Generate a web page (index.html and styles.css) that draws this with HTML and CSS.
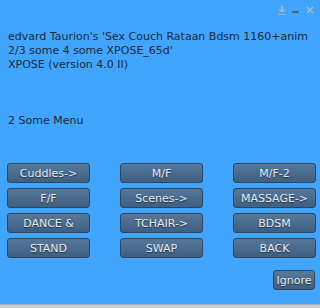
FILE: index.html
```html
<!DOCTYPE html>
<html lang="en">
<head>
  <meta charset="UTF-8">
  <meta name="viewport" content="width=device-width, initial-scale=1.0">
  <link rel="stylesheet" href="styles.css">
</head>
<body>

  <div class="floater">
    <div class="titlebar">
      <svg class="icon" width="8" height="9" viewBox="0 0 8 9">
        <rect x="3" y="0" width="2" height="4" fill="#9fb3c6"/>
        <polygon points="0.5,3.5 7.5,3.5 4,7" fill="#9fb3c6"/>
        <rect x="0" y="8" width="8" height="1" fill="#9fb3c6"/>
      </svg>
      <svg class="icon" width="8" height="9" viewBox="0 0 8 9">
        <rect x="0" y="5" width="7" height="2" fill="#4b6482"/>
      </svg>
      <svg class="icon" width="8" height="9" viewBox="0 0 8 9">
        <path d="M1 1 L7 7 M7 1 L1 7" stroke="#a8bccd" stroke-width="1.4"/>
      </svg>
    </div>

    <div class="message">edvard Taurion's 'Sex Couch Rataan Bdsm 1160+anim
2/3 some 4 some XPOSE_65d'
XPOSE (version 4.0 II)



2 Some Menu</div>

    <div class="buttons">
      <button class="btn">Cuddles-&gt;</button>
      <button class="btn">M/F</button>
      <button class="btn">M/F-2</button>
      <button class="btn">F/F</button>
      <button class="btn">Scenes-&gt;</button>
      <button class="btn">MASSAGE-&gt;</button>
      <button class="btn">DANCE &amp;</button>
      <button class="btn">TCHAIR-&gt;</button>
      <button class="btn">BDSM</button>
      <button class="btn">STAND</button>
      <button class="btn">SWAP</button>
      <button class="btn">BACK</button>
    </div>

    <div class="footer">
      <button class="btn ignore">Ignore</button>
    </div>
  </div>

</body>
</html>
```

FILE: styles.css
```css
body {
  margin: 0;
  background-color: #c9ccd0;
  font-family: "DejaVu Sans", Verdana, sans-serif;
}

.floater {
  height: 305px;
  background-color: #41a4fd;
  border-bottom: 1px solid #a9b2bb;
  box-sizing: border-box;
}

.titlebar {
  height: 30px;
  display: flex;
  justify-content: flex-end;
  align-items: flex-start;
  gap: 6px;
  padding: 6px 6px 0 0;
  box-sizing: border-box;
}

.icon {
  display: block;
}

.message {
  white-space: pre;
  font-size: 11px;
  line-height: 14px;
  color: #1c2a38;
  padding-left: 8px;
  height: 98px;
}

.buttons {
  display: grid;
  grid-template-columns: 83px 83px 83px;
  grid-auto-rows: 20px;
  column-gap: 30px;
  row-gap: 5px;
  padding-left: 7px;
  margin-top: 35px;
}

.btn {
  font-family: "DejaVu Sans", Verdana, sans-serif;
  font-size: 11px;
  color: #e6ebf0;
  text-shadow: 0 1px 1px #1d3048;
  background: linear-gradient(#56789b, #3f5f80);
  border: 1px solid #2c4663;
  border-radius: 3px;
  padding: 0;
  height: 20px;
  cursor: pointer;
}

.footer {
  display: flex;
  justify-content: flex-end;
  padding-right: 5px;
  margin-top: 12px;
}

.ignore {
  width: 42px;
  height: 20px;
}
```
